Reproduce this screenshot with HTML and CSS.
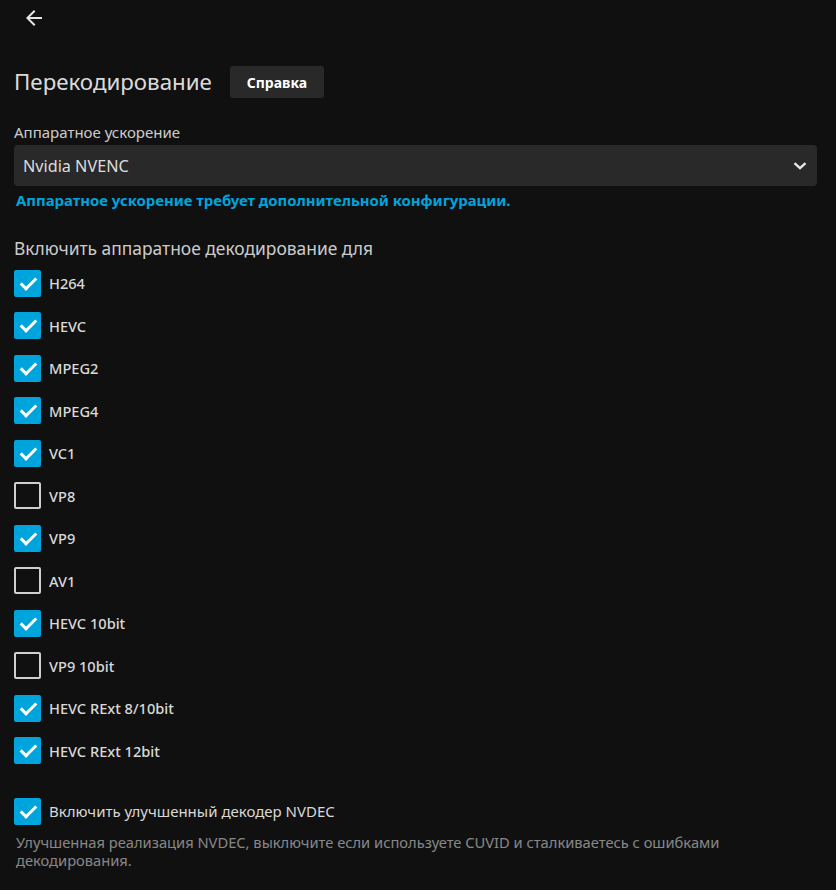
FILE: index.html
```html
<!DOCTYPE html>
<html lang="ru">
<head>
<meta charset="utf-8">
<link rel="stylesheet" href="styles.css">
</head>
<body>
<div class="topbar">
  <button class="back" aria-label="Назад">
    <svg width="24" height="24" viewBox="0 0 24 24"><path d="M20 11H7.83l5.59-5.59L12 4l-8 8 8 8 1.41-1.41L7.83 13H20v-2z" fill="#e6e6e6"/></svg>
  </button>
</div>
<main class="content">
  <div class="title-row">
    <h2 class="title">Перекодирование</h2>
    <a class="help-btn">Справка</a>
  </div>

  <div class="field">
    <label class="field-label">Аппаратное ускорение</label>
    <div class="select">
      <span>Nvidia NVENC</span>
      <svg class="chev" width="14" height="10" viewBox="0 0 14 10"><path d="M1.5 2.2 7 7.2l5.5-5" fill="none" stroke="#e6e6e6" stroke-width="2.4"/></svg>
    </div>
    <div class="hint-link">Аппаратное ускорение требует дополнительной конфигурации.</div>
  </div>

  <h3 class="section">Включить аппаратное декодирование для</h3>
  <div class="checklist">
    <div class="cb-row"><span class="box on"></span><span class="cb-label">H264</span></div>
    <div class="cb-row"><span class="box on"></span><span class="cb-label">HEVC</span></div>
    <div class="cb-row"><span class="box on"></span><span class="cb-label">MPEG2</span></div>
    <div class="cb-row"><span class="box on"></span><span class="cb-label">MPEG4</span></div>
    <div class="cb-row"><span class="box on"></span><span class="cb-label">VC1</span></div>
    <div class="cb-row"><span class="box"></span><span class="cb-label">VP8</span></div>
    <div class="cb-row"><span class="box on"></span><span class="cb-label">VP9</span></div>
    <div class="cb-row"><span class="box"></span><span class="cb-label">AV1</span></div>
    <div class="cb-row"><span class="box on"></span><span class="cb-label">HEVC 10bit</span></div>
    <div class="cb-row"><span class="box"></span><span class="cb-label">VP9 10bit</span></div>
    <div class="cb-row"><span class="box on"></span><span class="cb-label">HEVC RExt 8/10bit</span></div>
    <div class="cb-row"><span class="box on"></span><span class="cb-label">HEVC RExt 12bit</span></div>
  </div>

  <div class="nvdec">
    <div class="cb-row"><span class="box on"></span><span class="cb-label plain">Включить улучшенный декодер NVDEC</span></div>
    <div class="desc">Улучшенная реализация NVDEC, выключите если используете CUVID и сталкиваетесь с ошибками декодирования.</div>
  </div>
</main>
</body>
</html>
```
FILE: styles.css
```css
html, body {
  margin: 0;
  padding: 0;
  background: #101010;
  color: rgba(255,255,255,0.8);
  font-family: "Noto Sans", "Open Sans", sans-serif;
  width: 836px;
  height: 890px;
  overflow: hidden;
}
.topbar {
  height: 38px;
  display: flex;
  align-items: center;
  padding-left: 22px;
}
.back {
  background: none;
  border: 0;
  padding: 0;
  width: 24px;
  height: 24px;
  display: flex;
  margin-top: -2px;
}
.content {
  padding: 0 19px 0 14px;
}
.title-row {
  display: flex;
  align-items: center;
  margin-top: 28px;
  gap: 18px;
}
.title {
  margin: 0;
  font-size: 22.3px;
  font-weight: 400;
  color: rgba(255,255,255,0.87);
  line-height: 32px;
}
.help-btn {
  background: #292929;
  color: #fff;
  font-weight: 700;
  font-size: 14px;
  border-radius: 3px;
  height: 32px;
  width: 94px;
  display: flex;
  align-items: center;
  justify-content: center;
}
.field { margin-top: 24px; }
.field-label {
  display: block;
  font-size: 15px;
  line-height: 20px;
  color: rgba(255,255,255,0.8);
}
.select {
  margin-top: 3px;
  height: 41px;
  background: #292929;
  border-radius: 4px;
  display: flex;
  align-items: center;
  justify-content: space-between;
  padding: 0 10px 0 9px;
  font-size: 16.2px;
  color: rgba(255,255,255,0.85);
}
.hint-link {
  margin-top: 5px;
  padding-left: 2px;
  color: #00a4dc;
  font-weight: 700;
  font-size: 14.9px;
  line-height: 18px;
}
.section {
  margin: 27px 0 0;
  font-size: 17.4px;
  font-weight: 400;
  line-height: 24px;
  color: rgba(255,255,255,0.8);
}
.checklist { margin-top: 2px; }
.cb-row {
  display: flex;
  align-items: center;
  height: 42.5px;
  gap: 8px;
}
.box {
  box-sizing: border-box;
  width: 27px;
  height: 27px;
  border: 2px solid #cfcfcf;
  border-radius: 2px;
  flex: none;
  position: relative;
}
.box.on {
  background: #00a4dc;
  border-color: #00a4dc;
}
.box.on::after {
  content: "";
  position: absolute;
  left: 8px;
  top: 2px;
  width: 6px;
  height: 13px;
  border: solid #fff;
  border-width: 0 3px 3px 0;
  transform: rotate(45deg);
}
.cb-label {
  font-size: 14.6px;
  font-weight: 500;
  color: rgba(255,255,255,0.85);
}
.cb-label.plain {
  font-size: 15px;
  font-weight: 400;
}
.nvdec { margin-top: 23px; }
.nvdec .cb-row { height: 32px; }
.desc {
  margin-top: 6px;
  padding-left: 2px;
  font-size: 14.7px;
  line-height: 18px;
  color: rgba(255,255,255,0.5);
  max-width: 760px;
}
```
